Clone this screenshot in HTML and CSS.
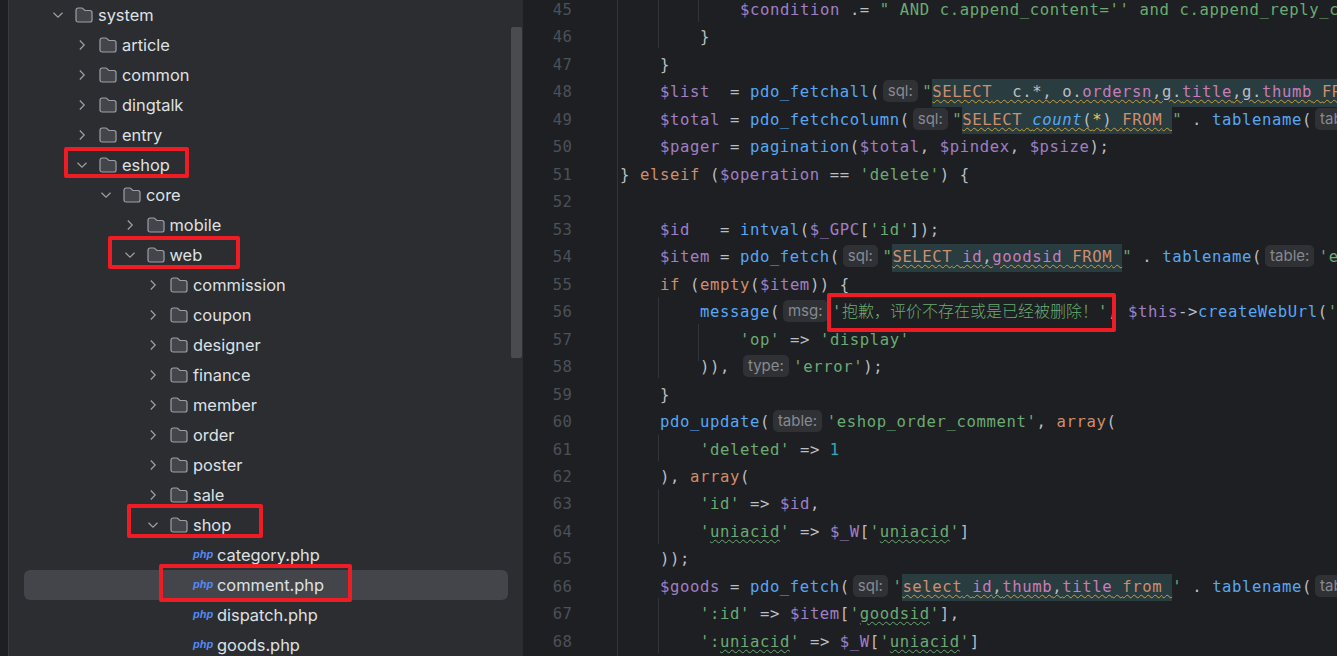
FILE: index.html
```html
<!DOCTYPE html>
<html lang="en">
<head>
<meta charset="utf-8">
<title>comment.php</title>
<link rel="stylesheet" href="styles.css">
</head>
<body>
<svg class="defs" width="0" height="0" aria-hidden="true">
  <symbol id="folder" viewBox="0 0 18 16"><path d="M1 3.2C1 2 1.9 1 3.1 1h3.6c.5 0 1 .2 1.3.6L9.9 3.5h5c1.2 0 2.1.9 2.1 2.1v7.3c0 1.2-.9 2.1-2.1 2.1H3.1C1.9 15 1 14 1 12.9z" fill="#43454a" stroke="#9da0a8" stroke-width="1.2"/></symbol>
  <symbol id="open" viewBox="0 0 12 12"><path d="M1.5 3.8 6 8.2l4.5-4.4" fill="none" stroke="#9da0a8" stroke-width="1.2"/></symbol>
  <symbol id="closed" viewBox="0 0 12 12"><path d="M3.8 1.5 8.2 6l-4.4 4.5" fill="none" stroke="#9da0a8" stroke-width="1.2"/></symbol>
</svg>
<main class="app">
  <aside class="tree">
    <div class="row l0"><svg class="chev"><use href="#open"/></svg><svg class="fld"><use href="#folder"/></svg><span>system</span></div>
    <div class="row l1"><svg class="chev"><use href="#closed"/></svg><svg class="fld"><use href="#folder"/></svg><span>article</span></div>
    <div class="row l1"><svg class="chev"><use href="#closed"/></svg><svg class="fld"><use href="#folder"/></svg><span>common</span></div>
    <div class="row l1"><svg class="chev"><use href="#closed"/></svg><svg class="fld"><use href="#folder"/></svg><span>dingtalk</span></div>
    <div class="row l1"><svg class="chev"><use href="#closed"/></svg><svg class="fld"><use href="#folder"/></svg><span>entry</span></div>
    <div class="row l1"><svg class="chev"><use href="#open"/></svg><svg class="fld"><use href="#folder"/></svg><span>eshop</span></div>
    <div class="row l2"><svg class="chev"><use href="#open"/></svg><svg class="fld"><use href="#folder"/></svg><span>core</span></div>
    <div class="row l3"><svg class="chev"><use href="#closed"/></svg><svg class="fld"><use href="#folder"/></svg><span>mobile</span></div>
    <div class="row l3"><svg class="chev"><use href="#open"/></svg><svg class="fld"><use href="#folder"/></svg><span>web</span></div>
    <div class="row l4"><svg class="chev"><use href="#closed"/></svg><svg class="fld"><use href="#folder"/></svg><span>commission</span></div>
    <div class="row l4"><svg class="chev"><use href="#closed"/></svg><svg class="fld"><use href="#folder"/></svg><span>coupon</span></div>
    <div class="row l4"><svg class="chev"><use href="#closed"/></svg><svg class="fld"><use href="#folder"/></svg><span>designer</span></div>
    <div class="row l4"><svg class="chev"><use href="#closed"/></svg><svg class="fld"><use href="#folder"/></svg><span>finance</span></div>
    <div class="row l4"><svg class="chev"><use href="#closed"/></svg><svg class="fld"><use href="#folder"/></svg><span>member</span></div>
    <div class="row l4"><svg class="chev"><use href="#closed"/></svg><svg class="fld"><use href="#folder"/></svg><span>order</span></div>
    <div class="row l4"><svg class="chev"><use href="#closed"/></svg><svg class="fld"><use href="#folder"/></svg><span>poster</span></div>
    <div class="row l4"><svg class="chev"><use href="#closed"/></svg><svg class="fld"><use href="#folder"/></svg><span>sale</span></div>
    <div class="row l4"><svg class="chev"><use href="#open"/></svg><svg class="fld"><use href="#folder"/></svg><span>shop</span></div>
    <div class="row file"><i class="php">php</i><span>category.php</span></div>
    <div class="row file sel"><i class="php">php</i><span>comment.php</span></div>
    <div class="row file"><i class="php">php</i><span>dispatch.php</span></div>
    <div class="row file"><i class="php">php</i><span>goods.php</span></div>
    <div class="scrollbar"></div>
  </aside>
  <section class="editor">
    <div class="guide g1"></div><div class="guide g2"></div><div class="guide g3"></div><div class="guide g4"></div><div class="guide g5"></div><div class="guide g6"></div><div class="guide g7"></div><div class="guide g8"></div>
    <div class="ln"><b>45</b><code class="i3"><u>$condition</u> .= <s>" AND c.append_content='' and c.append_reply_content=''</s></code></div>
    <div class="ln"><b>46</b><code class="i2">}</code></div>
    <div class="ln"><b>47</b><code class="i1">}</code></div>
    <div class="ln"><b>48</b><code class="i1"><u>$list</u>  = <em>pdo_fetchall</em>(<span class="hint">sql:</span><s>"</s><span class="hl"><kbd>SELECT</kbd>  c.*, o.<var>ordersn</var>,g.<var>title</var>,g.<var>thumb</var> <kbd>FROM</kbd> c c c c c</span></code></div>
    <div class="ln"><b>49</b><code class="i1"><u>$total</u> = <em>pdo_fetchcolumn</em>(<span class="hint">sql:</span><s>"</s><span class="hl"><kbd>SELECT</kbd> <em class="it">count</em>(<mark>*</mark>) <kbd>FROM</kbd> </span><s>"</s> . <em>tablename</em>(<span class="hint">table:</span></code></div>
    <div class="ln"><b>50</b><code class="i1"><u>$pager</u> = <em>pagination</em>(<u>$total</u>, <u>$pindex</u>, <u>$psize</u>);</code></div>
    <div class="ln"><b>51</b><code>} <kbd>elseif</kbd> (<u>$operation</u> == <s>'delete'</s>) {</code></div>
    <div class="ln"><b>52</b><code></code></div>
    <div class="ln"><b>53</b><code class="i1"><u>$id</u>   = <em>intval</em>(<u>$_GPC</u>[<s>'id'</s>]);</code></div>
    <div class="ln"><b>54</b><code class="i1"><u>$item</u> = <em>pdo_fetch</em>(<span class="hint">sql:</span><s>"</s><span class="hl"><kbd>SELECT</kbd> <var>id</var>,<var>goodsid</var> <kbd>FROM</kbd> </span><s>"</s> . <em>tablename</em>(<span class="hint">table:</span><s>'eshop_goods'</s></code></div>
    <div class="ln"><b>55</b><code class="i1"><kbd>if</kbd> (<kbd>empty</kbd>(<u>$item</u>)) {</code></div>
    <div class="ln"><b>56</b><code class="i2"><em>message</em>(<span class="hint">msg:</span><s>'<span class="cjk">抱歉，评价不存在或是已经被删除！</span>'</s>, <u>$this</u>-&gt;<em>createWebUrl</em>(<s>'comment'</s></code></div>
    <div class="ln"><b>57</b><code class="i3"><s>'op'</s> =&gt; <s>'display'</s></code></div>
    <div class="ln"><b>58</b><code class="i2">)), <span class="hint">type:</span><s>'error'</s>);</code></div>
    <div class="ln"><b>59</b><code class="i1">}</code></div>
    <div class="ln"><b>60</b><code class="i1"><em>pdo_update</em>(<span class="hint">table:</span><s>'eshop_order_comment'</s>, <kbd>array</kbd>(</code></div>
    <div class="ln"><b>61</b><code class="i2"><s>'deleted'</s> =&gt; <dfn>1</dfn></code></div>
    <div class="ln"><b>62</b><code class="i1">), <kbd>array</kbd>(</code></div>
    <div class="ln"><b>63</b><code class="i2"><s>'id'</s> =&gt; <u>$id</u>,</code></div>
    <div class="ln"><b>64</b><code class="i2"><s>'<a class="typo">uniacid</a>'</s> =&gt; <u>$_W</u>[<s>'<a class="typo">uniacid</a>'</s>]</code></div>
    <div class="ln"><b>65</b><code class="i1">));</code></div>
    <div class="ln"><b>66</b><code class="i1"><u>$goods</u> = <em>pdo_fetch</em>(<span class="hint">sql:</span><s>'</s><span class="hl"><kbd>select</kbd> <var>id</var>,<var>thumb</var>,<var>title</var> <kbd>from</kbd> </span><s>'</s> . <em>tablename</em>(<span class="hint">table:</span></code></div>
    <div class="ln"><b>67</b><code class="i2"><s>':id'</s> =&gt; <u>$item</u>[<s>'<a class="typo">goodsid</a>'</s>],</code></div>
    <div class="ln"><b>68</b><code class="i2"><s>':<a class="typo">uniacid</a>'</s> =&gt; <u>$_W</u>[<s>'<a class="typo">uniacid</a>'</s>]</code></div>
  </section>
  <div class="box b1"></div><div class="box b2"></div><div class="box b3"></div><div class="box b4"></div><div class="box b5"></div>
</main>
</body>
</html>
```
FILE: styles.css
```css
html, body { margin: 0; height: 100%; background: #1e1f22; overflow: hidden; }
.defs { position: absolute; }
.app { position: relative; display: flex; width: 1337px; height: 656px; overflow: hidden; }

/* project tree */
.tree { position: relative; box-sizing: border-box; width: 524px; flex: none; margin: 0; padding-left: 9px; background: #2b2d30; border-right: 1px solid #1e1f22; box-shadow: inset 8px 0 0 #1e1f22, inset 9px 0 0 #393b40; overflow: hidden; font: 16.4px/30px Inter, "Noto Sans", sans-serif; color: #dfe1e5; }
.row { display: flex; align-items: center; height: 30px; white-space: nowrap; }
.chev { width: 12px; height: 12px; flex: none; margin-right: 11px; }
.fld { width: 18px; height: 16px; flex: none; margin-right: 5px; }
.l0 { padding-left: 43px; }
.l1 { padding-left: 67px; }
.l2 { padding-left: 91px; }
.l3 { padding-left: 114.5px; }
.l4 { padding-left: 138px; }
.file { padding-left: 184px; }
.php { width: 24px; flex: none; font: italic 700 11px/14px "Liberation Sans", sans-serif; color: #548af7; margin-top: -3px; }
.sel { margin: 0 15px; padding-left: 169px; background: #43454a; border-radius: 6px; }
.scrollbar { position: absolute; left: 511px; top: 27px; width: 11px; height: 331px; background: #4a4b4f; border-radius: 2px; }

/* editor */
.editor { position: relative; flex: 1; min-width: 0; margin-top: -3px; height: 659px; overflow: hidden; font: 15.6px/27.48px "DejaVu Sans Mono", monospace; letter-spacing: .6px; color: #bcbec4; }
.ln { display: flex; height: 27.48px; white-space: pre; }
.ln b { width: 48px; flex: none; text-align: right; font-weight: 400; color: #4b5059; letter-spacing: .2px; }
.ln code { font: inherit; margin-left: 48px; flex: none; }
.i1 { padding-left: 40px; }
.i2 { padding-left: 80px; }
.i3 { padding-left: 120px; }
u { text-decoration: none; color: #a07fc4; }
s { text-decoration: none; color: #6aab73; }
em { font-style: normal; color: #56a8f5; }
kbd { font: inherit; color: #cf8e6d; }
var { font-style: normal; color: #c77dbb; }
dfn { font-style: normal; color: #2aacb8; }
mark { background: none; color: #f2c55c; }
.it { font-style: italic; }
.typo { text-decoration: underline wavy #6aab73 1px; text-underline-offset: 2px; }
.hl { display: inline-block; background: #293c40; text-decoration: underline wavy #c9a13f 1px; text-underline-offset: 2px; }
.hint { display: inline-block; margin: 0 4.5px 0 3px; padding: 0 5px; height: 22px; vertical-align: 1px; border-radius: 5px; background: #2f3135; color: #868a91; font: 15px/22px Inter, sans-serif; letter-spacing: 0; }
.cjk { font: 16px/1 "Noto Sans CJK SC", sans-serif; font-weight: 300; letter-spacing: 0; }
.guide { position: absolute; width: 1px; background: #313438; }
.g1 { left: 93px; top: 0; bottom: 0; }
.g2 { left: 134px; top: 0; height: 51px; }
.g3 { left: 174px; top: 0; height: 25px; }
.g4 { left: 134px; top: 300px; height: 81px; }
.g5 { left: 174px; top: 327px; height: 37px; }
.g6 { left: 134px; top: 438px; height: 26px; }
.g7 { left: 134px; top: 492px; height: 55px; }
.g8 { left: 134px; top: 601px; height: 55px; }

/* annotation rectangles */
.box { position: absolute; box-sizing: border-box; border: 4px solid #ee1c25; border-radius: 2px; }
.b1 { left: 64px; top: 147px; width: 125px; height: 31px; }
.b2 { left: 108px; top: 236px; width: 132px; height: 33px; }
.b3 { left: 127px; top: 504px; width: 136px; height: 34px; }
.b4 { left: 159px; top: 564px; width: 193px; height: 38px; }
.b5 { left: 827px; top: 293px; width: 289px; height: 39px; }
```
